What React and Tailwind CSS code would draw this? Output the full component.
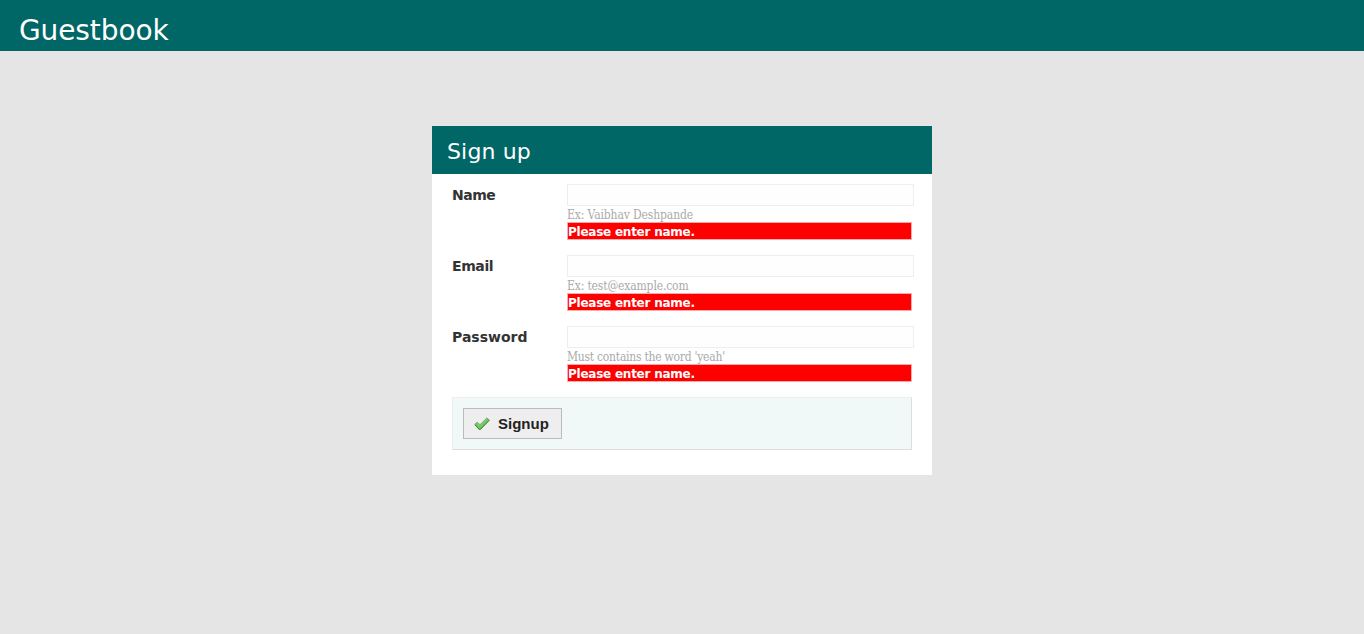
const fields = [
  { label: 'Name', type: 'text', hint: 'Ex: Vaibhav Deshpande', labelStyle: 'tracking-[-0.5px]', hintStyle: 'tracking-[-0.12px]' },
  { label: 'Email', type: 'email', hint: 'Ex: test@example.com', labelStyle: 'tracking-[-0.4px]', hintStyle: 'tracking-[-0.15px]' },
  { label: 'Password', type: 'password', hint: "Must contains the word 'yeah'", labelStyle: 'tracking-normal', hintStyle: 'tracking-[-0.25px]' },
];

function CheckIcon() {
  return (
    <svg width="16" height="16" viewBox="0 0 16 16" aria-hidden="true">
      <path d="M0.8 8.3 3.2 6.3 6 8.7 12.8 2 15.3 4 6.4 13.4H5Z" fill="#72c267" stroke="#5da654" strokeWidth="0.9" strokeLinejoin="round" />
      <path d="M1 9 5.2 13.4H6.4L15.2 4.4" fill="none" stroke="#3c8838" strokeWidth="0.9" />
      <path d="M2.2 8.3 3.3 7.3 6 9.8 12.8 3" fill="none" stroke="#8fd385" strokeWidth="0.9" />
    </svg>
  );
}

function Field({ label, type, hint, labelStyle, hintStyle }) {
  return (
    <div className="flex h-[71px]">
      <label className={`w-[115px] shrink-0 pt-[2px] text-[14px] leading-[18px] font-bold text-[#333] ${labelStyle}`}>{label}</label>
      <div className="w-[345px]">
        <input type={type} aria-label={label} className="block h-[22px] w-[347px] border border-[#eee] bg-[#fefefe] px-1 outline-none" />
        <p className={`h-4 whitespace-nowrap font-['DejaVu_Serif_Condensed','DejaVu_Serif',serif] text-[12px] leading-[19px] text-[#aaa] [font-stretch:condensed] ${hintStyle}`}>{hint}</p>
        <p className="h-[18px] border border-[#ffaaaa] bg-[#f00] text-[12px] leading-[18px] font-bold tracking-[-0.24px] whitespace-nowrap text-white">Please enter name.</p>
      </div>
    </div>
  );
}

export default function App() {
  return (
    <div className="min-h-screen bg-[#e5e5e5] font-['Verdana','DejaVu_Sans',sans-serif]">
      <header className="h-[51px] bg-[#006666] pt-[10px] pl-[19px]">
        <h1 className="text-[28px] leading-[42px] tracking-[-0.1px] text-white">Guestbook</h1>
      </header>
      <main className="mx-auto mt-[75px] h-[349px] w-[500px] bg-white">
        <h2 className="h-12 bg-[#006666] pl-[15px] text-[22px] leading-[52px] tracking-[0.15px] text-white">Sign up</h2>
        <form className="px-5 pt-[10px]">
          {fields.map((f) => <Field key={f.label} {...f} />)}
          <div className="h-[53px] border border-t-[#eee] border-r-[#ddd] border-b-[#ddd] border-l-[#eee] bg-[#f0f8f8] p-[10px]">
            <button type="button" className="flex h-[31px] w-[99px] items-center gap-2 border border-[#bbb] bg-[#eee] pl-[10px] font-['Liberation_Sans',Arial,sans-serif] text-[15px] font-bold text-[#222]">
              <CheckIcon />
              <span className="pt-[2px]">Signup</span>
            </button>
          </div>
        </form>
      </main>
    </div>
  );
}
